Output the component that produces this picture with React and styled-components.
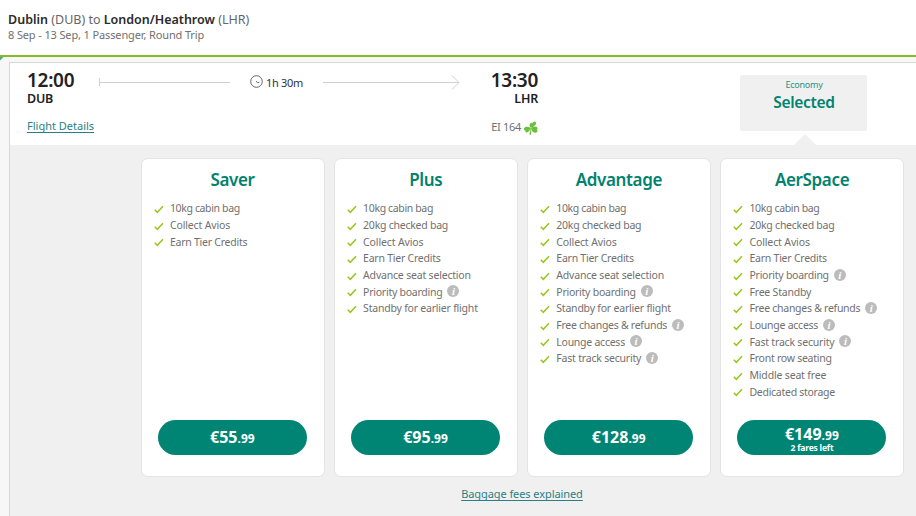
import React from "react";
import styled, { createGlobalStyle } from "styled-components";

const Global = createGlobalStyle`
  * { box-sizing: border-box; }
  body { margin: 0; background: #fff; overflow: hidden; font-family: "Noto Sans", "Open Sans", sans-serif; }
`;

const Page = styled.div`
  width: 916px;
  height: 516px;
  overflow: hidden;
  display: flex;
  flex-direction: column;
  background: #fff;
  color: #707070;
`;

const Header = styled.header`
  height: 57px;
  padding: 12px 8px 0;
  border-bottom: 2px solid #83bc1c;
  flex: none;
`;

const Route = styled.h1`
  margin: 0;
  font-size: 12.5px;
  line-height: 16px;
  font-weight: 400;
  letter-spacing: 0;
  color: #666;
  b { font-weight: 600; color: #2b2b2b; }
`;

const Summary = styled.p`
  margin: -1px 0 0;
  font-size: 11px;
  line-height: 15px;
  letter-spacing: -0.13px;
`;

const Body = styled.main`
  flex: 1;
  min-height: 0;
  padding: 5px 0 0 9px;
  background: linear-gradient(135deg, #4fa79b 2px, #f7f7f7 3px);
`;

const Panel = styled.section`
  height: 100%;
  border: 1px solid #d8d8d8;
  border-right: 0;
  border-bottom: 0;
  background: #f0f0f0;
`;

const Flight = styled.div`
  height: 82px;
  background: #fff;
  display: flex;
  padding-left: 17px;
`;

const Stop = styled.div`
  width: ${(p) => p.$width}px;
  text-align: ${(p) => p.$align || "left"};
  padding-top: 6px;
  white-space: nowrap;
  flex: none;
`;

const Time = styled.div`
  font-size: 19px;
  line-height: 22px;
  font-weight: 600;
  letter-spacing: -0.3px;
  color: #222;
`;

const Code = styled.div`
  font-size: 12.5px;
  line-height: 16px;
  font-weight: 600;
  letter-spacing: -0.2px;
  color: #222;
`;

const TextLink = styled.a`
  font-size: 11px;
  line-height: 15px;
  letter-spacing: ${(p) => p.$spacing || 0}px;
  color: #2a7f86;
  text-decoration: underline;
  text-underline-offset: 1.5px;
  text-decoration-skip-ink: none;
`;

const DetailsRow = styled.div`
  margin-top: 11px;
  line-height: 15px;
  font-size: 11px;
  display: flex;
`;

const FlightNo = styled.div`
  margin-top: 11px;
  height: 16px;
  display: flex;
  align-items: center;
  justify-content: flex-end;
  gap: 3px;
  font-size: 11px;
  letter-spacing: -0.3px;
  svg { margin-top: 3px; }
`;

const Track = styled.div`
  display: flex;
  height: 16px;
  width: 361px;
  margin: 11px 0 0 23px;
  align-items: center;
  flex: none;
`;

const Duration = styled.div`
  display: flex;
  align-items: center;
  gap: 3px;
  width: 93px;
  padding-left: 20px;
  font-size: 11px;
  color: #333;
  letter-spacing: -0.3px;
  white-space: nowrap;
  svg { margin-top: -2px; }
`;

const Selected = styled.div`
  width: 127px;
  height: 56px;
  margin: 12px 0 0 202px;
  padding: 3px 0 0 1px;
  background: #f0f0f0;
  border-radius: 2px;
  text-align: center;
  color: #00826f;
  flex: none;
`;

const Cabin = styled.div`
  font-size: 9px;
  line-height: 14px;
  letter-spacing: -0.25px;
  color: #259583;
`;

const Status = styled.div`
  font-size: 15.5px;
  line-height: 20px;
  font-weight: 600;
  letter-spacing: -0.3px;
`;

const Fares = styled.div`
  position: relative;
  display: grid;
  grid-template-columns: repeat(4, 184px);
  column-gap: 9.2px;
  padding: 13px 0 0 130.5px;
`;

const Pointer = styled.svg`
  position: absolute;
  left: 783px;
  top: -11px;
`;

const Card = styled.article`
  height: 319px;
  background: #fff;
  border: 1px solid #e4e4e4;
  border-radius: 7px;
  padding: 9px 17px 21px;
  display: flex;
  flex-direction: column;
`;

const CardTitle = styled.h2`
  margin: 0 0 11px;
  font-size: 17px;
  line-height: 24px;
  font-weight: 600;
  letter-spacing: -0.35px;
  text-align: center;
  color: #00826f;
`;

const Features = styled.ul`
  list-style: none;
  margin: -3px 0 0 -4.6px;
  padding: 0;
  flex: 1;
`;

const Feature = styled.li`
  display: flex;
  align-items: center;
  height: 16.68px;
  font-size: 10.5px;
  letter-spacing: ${(p) => p.$spacing || 0}px;
  white-space: nowrap;
  svg:first-child { margin: 2px 6px 0 0; }
`;

const Info = styled.span`
  width: 12px;
  height: 12px;
  margin: -1px 0 0 5px;
  border-radius: 50%;
  background: #bcbcbc;
  color: #fff;
  font: italic 700 11px/12px "Liberation Serif", serif;
  letter-spacing: 0;
  text-align: center;
`;

const PriceButton = styled.button`
  width: 149px;
  height: 35px;
  margin: 0 0 0 -0.6px;
  padding: 0;
  border: 0;
  border-radius: 18px;
  background: #008575;
  color: #fff;
  font-family: inherit;
  font-weight: 700;
  flex: none;
`;

const Price = styled.div`
  font-size: 16px;
  line-height: 18px;
  letter-spacing: 0;
  padding-top: ${(p) => (p.$raised ? 2 : 0)}px;
  small { font-size: 12px; letter-spacing: 0.1px; }
`;

const Left = styled.div`
  font-size: 8.5px;
  line-height: 9px;
  margin-top: -2px;
  letter-spacing: -0.2px;
`;

const Footer = styled.div`
  display: flex;
  justify-content: center;
  margin: 9px 0 0 118px;
`;

const Check = () => (
  <svg width="10" height="9" viewBox="0 0 10 9" fill="none">
    <path d="M.8 4.7 3.3 7.3 9 1.2" stroke="#99c61d" strokeWidth="1.5" />
  </svg>
);

const Clock = () => (
  <svg width="13" height="13" viewBox="0 0 13 13" fill="none" stroke="#555" strokeWidth=".9">
    <circle cx="6.5" cy="6.5" r="5.8" />
    <path d="M6 6.2 7.4 7.5h1.8" />
  </svg>
);

const LineStart = () => (
  <svg width="131" height="16" viewBox="0 0 131 16" stroke="#d0d0d0">
    <path d="M.5 4v8M.5 8.5H131" />
  </svg>
);

const LineEnd = () => (
  <svg width="137" height="16" viewBox="0 0 137 16" fill="none" stroke="#d0d0d0">
    <path d="M0 8.5H136M129 1.500l7 7-7 7" />
  </svg>
);

const Shamrock = () => (
  <svg width="14" height="14" viewBox="0 0 14 14" fill="#6cbf3a">
    <path d="M6.600 6.500C5.200 4.800 5.400 3.100 6.400 2.200 7.100 1.500 8 1.800 8.400 2.400 9 .8 10.500 0 11.600.9 13.200 2.500 10.900 5.600 6.600 6.500z" />
    <path d="M6.200 6.700C6.400 8.900 4.900 11.200 3 11.400 1.600 11.500 1.100 10.500 1.500 9.500.2 9.600-.4 8.300.3 7.100 1.300 5.300 4.200 5.200 6.200 6.700z" />
    <path d="M7 6.900C8.500 5.400 11.300 4.900 12.800 6c1.200.8.900 2.100 0 2.600 1.100.8.900 2.300-.3 3C10.600 12.600 7.600 10.600 7 6.900z" />
    <path d="M6.200 6.500C6.500 9.200 6.300 11.300 5.300 13.200l1.600.7C7.500 11.600 7.300 9.200 7 6.600z" />
  </svg>
);

const base = ["10kg cabin bag", -0.36];
const bag = ["20kg checked bag", -0.24];
const avios = ["Collect Avios", -0.13];
const tier = ["Earn Tier Credits", -0.24];
const seat = ["Advance seat selection", -0.19];
const priority = ["Priority boarding", -0.25, true];
const changes = ["Free changes & refunds", -0.27, true];
const lounge = ["Lounge access", -0.25, true];
const fast = ["Fast track security", -0.2, true];
const standby = ["Standby for earlier flight", -0.21];

const fares = [
  { name: "Saver", euros: "55", items: [base, avios, tier] },
  { name: "Plus", euros: "95", items: [base, bag, avios, tier, seat, priority, standby] },
  {
    name: "Advantage",
    euros: "128",
    items: [base, bag, avios, tier, seat, priority, standby, changes, lounge, fast],
  },
  {
    name: "AerSpace",
    euros: "149",
    left: "2 fares left",
    items: [
      base, bag, avios, tier, priority, ["Free Standby", -0.2], changes, lounge, fast,
      ["Front row seating", -0.25], ["Middle seat free", -0.17], ["Dedicated storage", -0.28],
    ],
  },
];

const FareCard = ({ fare }) => (
  <Card>
    <CardTitle>{fare.name}</CardTitle>
    <Features>
      {fare.items.map(([label, spacing, info]) => (
        <Feature key={label} $spacing={spacing}>
          <Check />
          <span>{label}</span>
          {info && <Info>i</Info>}
        </Feature>
      ))}
    </Features>
    <PriceButton>
      <Price $raised={Boolean(fare.left)}>€{fare.euros}<small>.99</small></Price>
      {fare.left && <Left>{fare.left}</Left>}
    </PriceButton>
  </Card>
);

export default function App() {
  return (
    <Page>
      <Global />
      <Header>
        <Route><b>Dublin</b> (DUB) to <b>London/Heathrow</b> (LHR)</Route>
        <Summary>8 Sep - 13 Sep, 1 Passenger, Round Trip</Summary>
      </Header>
      <Body>
        <Panel>
          <Flight>
            <Stop $width={49}>
              <Time>12:00</Time>
              <Code>DUB</Code>
              <DetailsRow><TextLink>Flight Details</TextLink></DetailsRow>
            </Stop>
            <Track>
              <LineStart />
              <Duration><Clock />1h 30m</Duration>
              <LineEnd />
            </Track>
            <Stop $width={78} $align="right">
              <Time>13:30</Time>
              <Code>LHR</Code>
              <FlightNo>EI 164<Shamrock /></FlightNo>
            </Stop>
            <Selected>
              <Cabin>Economy</Cabin>
              <Status>Selected</Status>
            </Selected>
          </Flight>
          <Fares>
            <Pointer width="24" height="12" viewBox="0 0 24 12">
              <path d="M0 12 12 0l12 12z" fill="#f0f0f0" />
            </Pointer>
            {fares.map((fare) => <FareCard key={fare.name} fare={fare} />)}
          </Fares>
          <Footer><TextLink $spacing={-0.08}>Baggage fees explained</TextLink></Footer>
        </Panel>
      </Body>
    </Page>
  );
}
